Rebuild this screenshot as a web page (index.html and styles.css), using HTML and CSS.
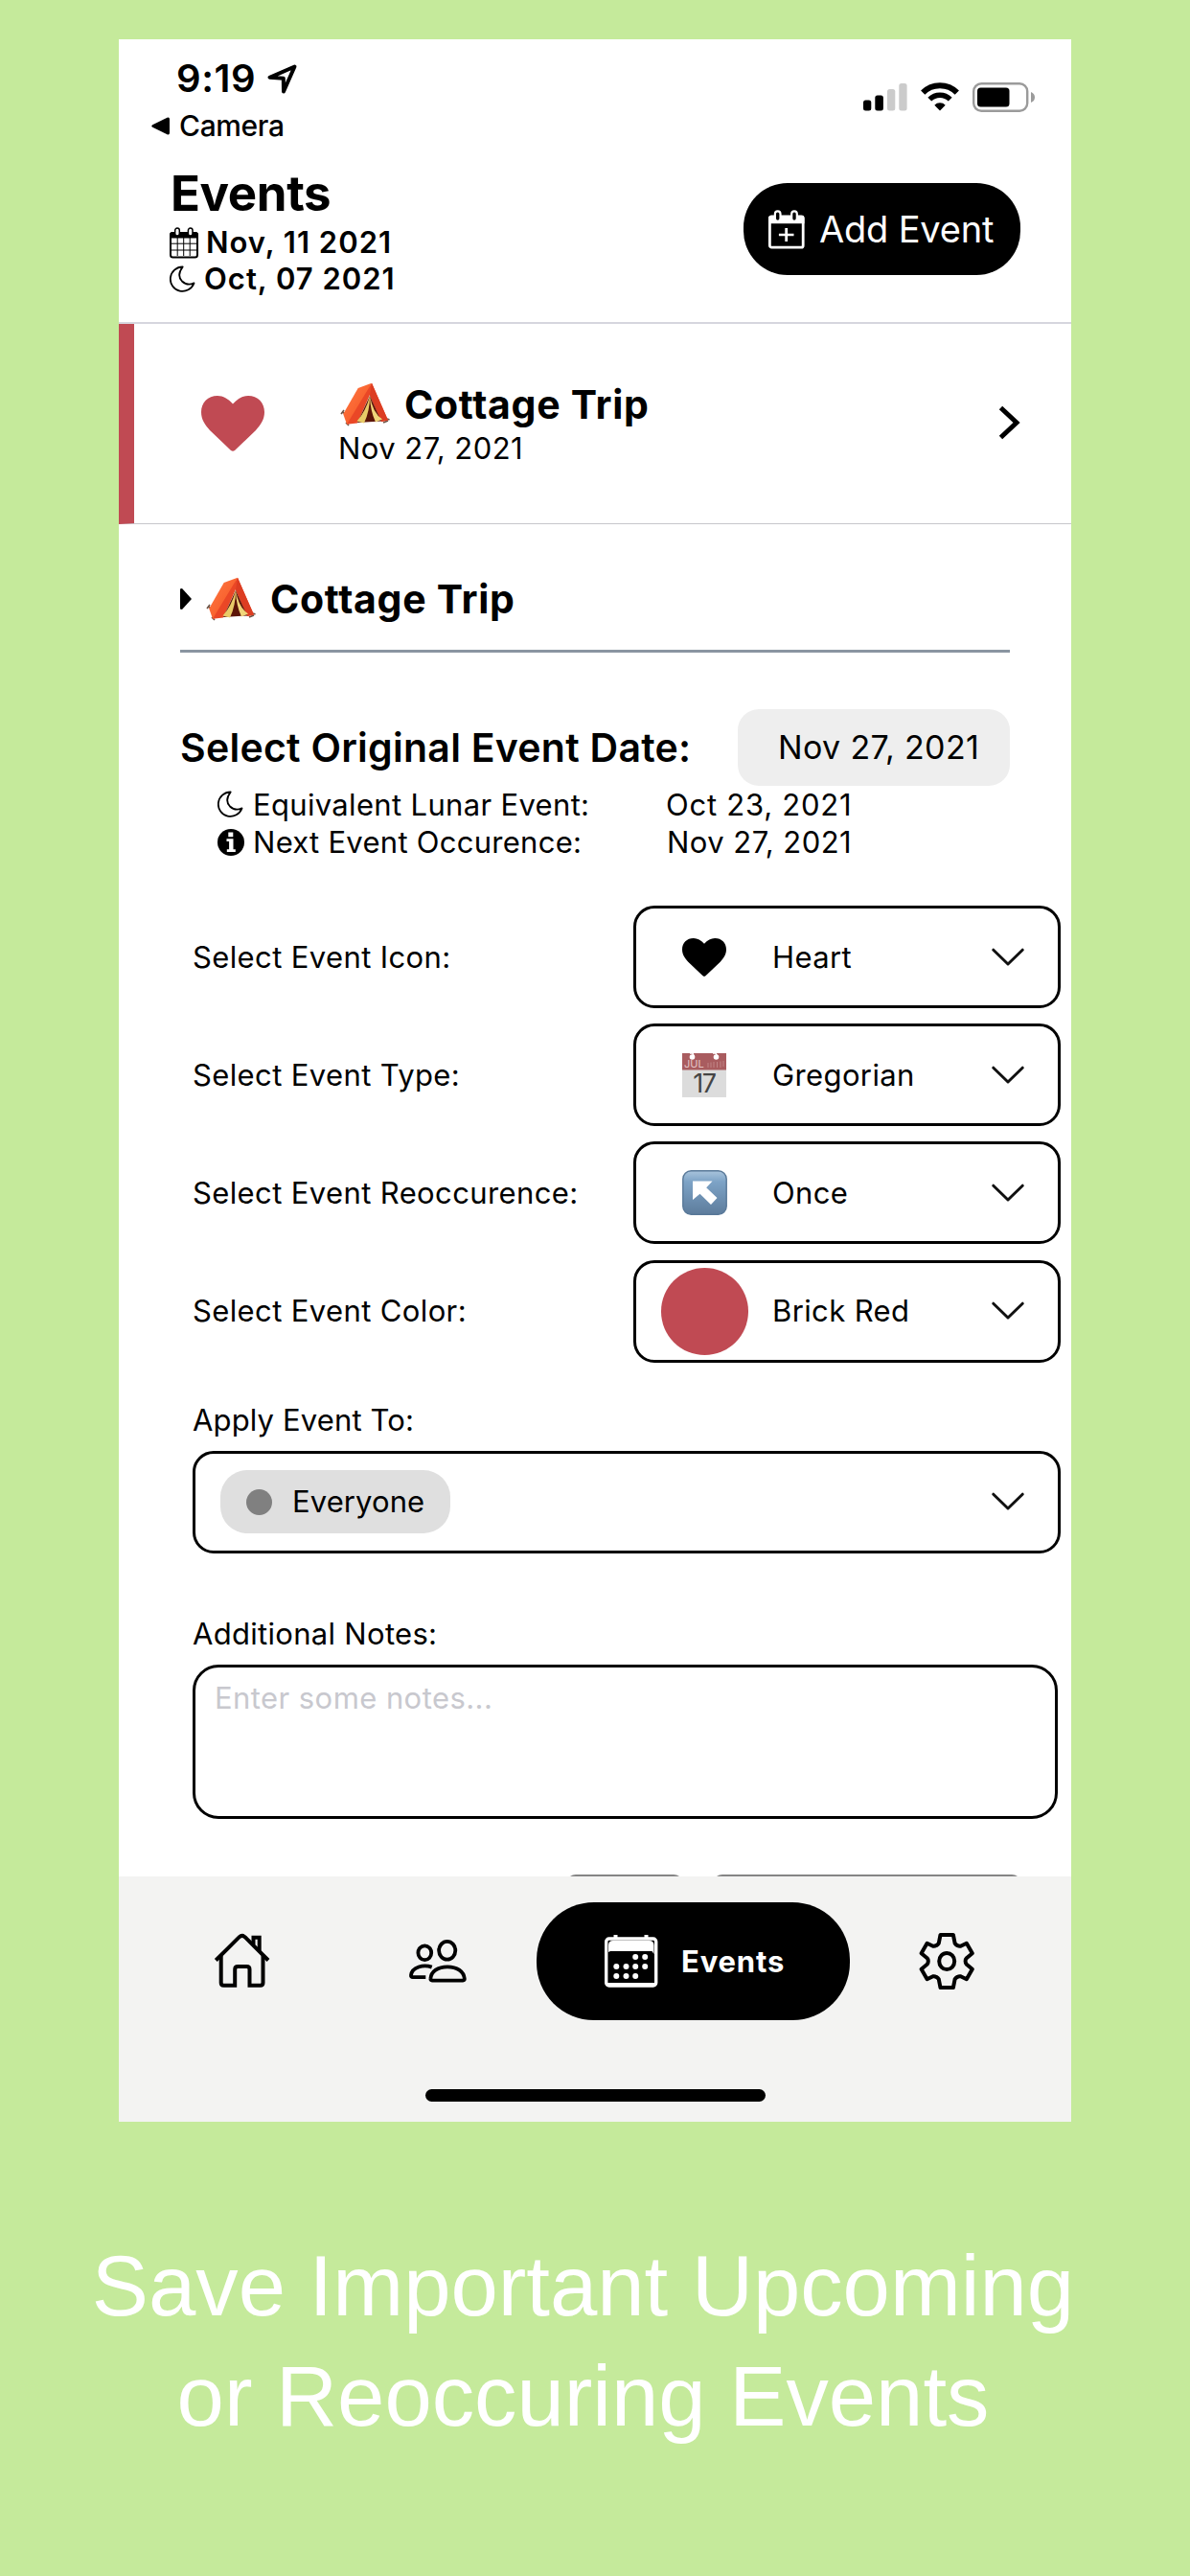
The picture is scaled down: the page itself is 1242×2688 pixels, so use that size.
FILE: index.html
```html
<!DOCTYPE html>
<html lang="en">
<head>
<meta charset="utf-8">
<title>Events</title>
<link rel="stylesheet" href="styles.css">
</head>
<body>
<svg class="defs" width="0" height="0" aria-hidden="true">
  <defs>
    <linearGradient id="canvas-left" x1="0" y1="0" x2="1" y2="1"><stop offset="0" stop-color="#ff7a45"/><stop offset="1" stop-color="#f4511e"/></linearGradient>
    <linearGradient id="key-blue" x1="0" y1="0" x2="0" y2="1"><stop offset="0" stop-color="#a9c4dc"/><stop offset=".25" stop-color="#7da3c6"/><stop offset="1" stop-color="#5d7c9c"/></linearGradient>
    <symbol id="tent" viewBox="0 0 52 46">
      <path d="M2 31l6 3M4 29l-3 4M6 42l3 3M49 38l2.5 1M45 42l5-2" stroke="#6b5245" stroke-width="1.6" fill="none"/>
      <path d="M33 .8L18.7 6 3.2 33 7 43.8 14 42z" fill="url(#canvas-left)"/>
      <path d="M33 .8L7 43.8 18 42.4 31 13 43 41 50 39.5z" fill="#ea4726"/>
      <path d="M33 .8L31 14 43 41 50 39.5z" fill="#dc3d22"/>
      <path d="M31 14L18 42 43 40.5z" fill="#5c1508"/>
      <path d="M31 14Q27 30 17.5 40.5L25 42.5Q31 30 31 14z" fill="#e9cb68"/>
      <path d="M31 14Q34 32 44 38.5L37 41.5Q31.500 30 31 14z" fill="#f0d57a"/>
    </symbol>
    <symbol id="moon" viewBox="0 0 27 29">
      <path d="M13.700 1.500C9.500 7 9.200 12.500 13 16.500c3.500 3.400 8 4 12.500 1.900A12.700 12.700 0 1 1 13.700 1.500z" fill="none" stroke="#000" stroke-width="1.800" stroke-linejoin="round"/>
    </symbol>
    <symbol id="heart" viewBox="0 0 66 58">
      <path d="M33 8.500C38 3 43 0 49 0c10 0 17 7 17 17 0 8-4 13-9 19L35 57q-2 1.500-4 0L9 36C4 30 0 25 0 17 0 7 7 0 17 0c6 0 11 3 16 8.500z"/>
    </symbol>
    <symbol id="chevron" viewBox="0 0 34 20">
      <path d="M1.800 2.200L17 17 32.200 2.200" fill="none" stroke="#111" stroke-width="3" stroke-linecap="round" stroke-linejoin="round"/>
    </symbol>
  </defs>
</svg>
<main class="phone">
  <div class="status">
    <div class="status-left">
      <div class="clock">9:19
        <svg width="31" height="31" viewBox="0 0 31 31"><path d="M28.500 2.500L2.500 13.800l14.300 1 .2 13.700z" fill="none" stroke="#000" stroke-width="4" stroke-linejoin="round"/></svg>
      </div>
      <div class="back"><svg width="19" height="19" viewBox="0 0 19 19"><path d="M1.200 8.200L16.500.8Q19 0 19 2.500v14q0 2.500-2.500 1.700L1.200 10.800q-1.900-1.300 0-2.600z"/></svg>Camera</div>
    </div>
    <div class="status-right">
      <svg width="46" height="30" viewBox="0 0 46 30"><rect y="18.500" width="8.300" height="11" rx="2.500"/><rect x="12.300" y="13.500" width="8.600" height="16" rx="2.500"/><rect x="25" y="7" width="8.300" height="22.500" rx="2.500" fill="#cbcbcb"/><rect x="37.300" y="1" width="8.300" height="28.500" rx="2.500" fill="#cbcbcb"/></svg>
      <svg width="40" height="30" viewBox="0 0 40 30"><g fill="none" stroke="#000"><path d="M2.200 10.700a25.200 25.200 0 0 1 35.600 0" stroke-width="6"/><path d="M9.300 17.600a15.200 15.200 0 0 1 21.400 0" stroke-width="5.500"/></g><path d="M14.300 23.700a8 8 0 0 1 11.400 0L20 29.500z"/></svg>
      <svg width="65" height="31" viewBox="0 0 65 31"><rect x="1.200" y="1.200" width="56" height="28.600" rx="8" fill="none" stroke="#9b9b9b" stroke-width="2.400"/><rect x="5" y="5.500" width="33.500" height="20" rx="3.500"/><path d="M61 10q4 1.500 4 5.500t-4 5.500z" fill="#9b9b9b"/></svg>
    </div>
  </div>

  <header class="header">
    <div>
      <h1>Events</h1>
      <div class="today"><svg width="30" height="33" viewBox="0 0 30 33"><rect x="1" y="6" width="28" height="25.500" rx="2.500" fill="#fff" stroke="#000" stroke-width="2"/><path d="M0 11.500V8q0-3 3-3h24q3 0 3 3v3.500z"/><path d="M8.200 11v19M14.700 11v19M21.200 11v19M2 17.200h26M2 24h26" stroke="#000" stroke-width="1"/><rect x="5.700" y="1" width="4.600" height="8" rx="2.300" fill="#fff" stroke="#000" stroke-width="1.500"/><rect x="19.400" y="1" width="4.600" height="8" rx="2.300" fill="#fff" stroke="#000" stroke-width="1.500"/></svg>Nov, 11 2021</div>
      <div class="today lunar"><svg width="27" height="29"><use href="#moon"/></svg>Oct, 07 2021</div>
    </div>
    <button class="add" type="button"><svg width="38" height="41" viewBox="0 0 38 41"><rect x="1.400" y="7" width="34.800" height="32.200" rx="2" fill="none" stroke="#fff" stroke-width="2.800"/><path d="M0 14.300V8.500q0-2.500 2.500-2.500H35q2.500 0 2.500 2.500v5.800zM17.300 19h2.800v5.700h6.400v2.600h-6.400V33h-2.800v-5.700h-6.400v-2.600h6.400z" fill="#fff"/><g fill="#000" stroke="#fff" stroke-width="2.200"><rect x="6.900" y="1.300" width="5.600" height="10.500" rx="2.800"/><rect x="24.200" y="1.300" width="5.600" height="10.500" rx="2.800"/></g></svg>Add Event</button>
  </header>

  <article class="event">
    <svg class="event-heart" width="66" height="58"><use href="#heart"/></svg>
    <div class="event-text">
      <div class="title"><svg width="52" height="46"><use href="#tent"/></svg>Cottage Trip</div>
      <div class="date">Nov 27, 2021</div>
    </div>
    <svg width="24" height="38" viewBox="0 0 24 38"><path d="M3.500 3.500L20 19 3.500 34.500" fill="none" stroke="#000" stroke-width="5"/></svg>
  </article>

  <section class="scroll">
    <div class="details">
      <h2 class="title section-title"><svg class="marker" width="12" height="22" viewBox="0 0 12 22"><path d="M0 .5L2 0 12 11 2 22 0 21.500z"/></svg><svg width="52" height="46"><use href="#tent"/></svg>Cottage Trip</h2>
      <div class="pick-date"><span>Select Original Event Date:</span><span class="date-pill">Nov 27, 2021</span></div>
      <dl class="facts">
        <dt><svg width="27" height="29"><use href="#moon"/></svg>Equivalent Lunar Event:</dt><dd>Oct 23, 2021</dd>
        <dt class="next"><svg width="28" height="28" viewBox="0 0 28 28"><circle cx="14" cy="14" r="14"/><path d="M11.300 3.500h5v4.800h-5zM9.500 10.200h7v11h2.300V24h-9v-2.800h2.300v-8.200H9.500z" fill="#fff"/></svg>Next Event Occurence:</dt><dd class="next">Nov 27, 2021</dd>
      </dl>
    </div>

    <form class="form">
      <div class="field"><label>Select Event Icon:</label>
        <div class="select"><span class="pic"><svg width="46" height="40" viewBox="0 0 66 58" preserveAspectRatio="none"><use href="#heart" width="66" height="58"/></svg></span><span class="value">Heart</span><svg width="34" height="20"><use href="#chevron"/></svg></div></div>
      <div class="field"><label>Select Event Type:</label>
        <div class="select"><span class="pic"><svg width="46" height="46" viewBox="0 0 46 46"><path fill="#dcdcdc" d="M0 0h46v46H0z"/><path fill="#a95c5f" d="M0 0h46v17.500H0z"/><circle cx="10.500" cy="4" r="2.800" fill="#fff"/><circle cx="35.500" cy="4" r="2.800" fill="#fff"/><path d="M8 0h3l1 3M32 0h3l1.500 3" stroke="#fff" stroke-width="1.500" fill="none"/><path d="M27 10v5M30 9.500V15M33 9v6M36.500 9v6M40 8.500V15M43 8v6" stroke="#c08486"/><text class="month" x="2" y="15.300">JUL</text><text class="day" x="23" y="41" text-anchor="middle">17</text></svg></span><span class="value">Gregorian</span><svg width="34" height="20"><use href="#chevron"/></svg></div></div>
      <div class="field"><label>Select Event Reoccurence:</label>
        <div class="select"><span class="pic"><svg width="47" height="47" viewBox="0 0 47 47"><rect x=".8" y=".8" width="45.400" height="45.400" rx="8.500" fill="url(#key-blue)" stroke="#587898" stroke-width="1.400"/><path d="M11 11.500h20.500l-6.300 6.800L36.500 29 30 36 18.500 24.800 11 31z" fill="#fff"/></svg></span><span class="value">Once</span><svg width="34" height="20"><use href="#chevron"/></svg></div></div>
      <div class="field"><label>Select Event Color:</label>
        <div class="select"><span class="pic"><span class="swatch"></span></span><span class="value">Brick Red</span><svg width="34" height="20"><use href="#chevron"/></svg></div></div>

      <label class="stacked apply">Apply Event To:</label>
      <div class="select wide"><span class="chip"><i></i>Everyone</span><svg width="34" height="20"><use href="#chevron"/></svg></div>

      <label class="stacked notes-label">Additional Notes:</label>
      <div class="notes">Enter some notes...</div>
      <div class="actions"><span class="ghost small"></span><span class="ghost"></span></div>
    </form>
  </section>

  <nav class="nav">
    <div class="tabs">
      <svg width="58" height="57" viewBox="0 0 58 57"><g fill="none" stroke="#000" stroke-width="4"><path d="M1.300 27.500L25.800 3.200q2.900-2.600 5.800 0L56 27.500"/><path d="M6.700 23v28q0 2.700 2.700 2.700h11.800V37q0-3 3-3h9.300q3 0 3 3v16.700h11.300q2.700 0 2.700-2.700V23M40.500 11V3.700h6.200v14"/></g></svg>
      <svg width="60" height="46" viewBox="0 0 60 46"><g fill="none" stroke="#000" stroke-width="3.800"><ellipse cx="39.700" cy="11.300" rx="8.600" ry="9.400"/><ellipse cx="16.300" cy="13.700" rx="6.900" ry="7.400"/><path d="M24 42.600q-1.800 0-1.600-1.900C23 33 30 28.300 40 28.300S57 33 57.800 40.700q.2 1.900-1.600 1.900z"/><path d="M23.700 28.600C15 25.500 3 28.500 2 37q-.3 2.200 1.800 2.200h13.500"/></g></svg>
      <div class="tab-active"><svg width="56" height="56" viewBox="0 0 56 56"><rect x="1.700" y="4" width="52" height="49" rx="3" fill="none" stroke="#fff" stroke-width="3.400"/><path d="M4 18V11q0-5 5-5h37.500q5 0 5 5v9l-2-3H6zM3 50h49v4H3zM9.500 0h4v4h-4zM41.500 0h4v4h-4z" fill="#fff"/><g fill="#fff"><circle cx="32.200" cy="23" r="3"/><circle cx="42.200" cy="23" r="3"/><circle cx="12.300" cy="33" r="3"/><circle cx="22.500" cy="33" r="3"/><circle cx="32.200" cy="33" r="3"/><circle cx="42.200" cy="33" r="3"/><circle cx="12.300" cy="43" r="3"/><circle cx="22.500" cy="43" r="3"/><circle cx="32.200" cy="43" r="3"/></g></svg>Events</div>
      <svg width="57" height="59" viewBox="0 0 57 59"><g fill="none" stroke="#000" stroke-width="4" stroke-linejoin="round"><path d="M21.500 2h13.400l1.700 8.700q.8 1.500 2.600 2.400 1.800 1 3.400.6l6.200-3 6 10.500-6 5q-1.200 1.300-1.200 3.300t1.200 3.300l6 5-6 10.500-6.200-3q-1.600-.4-3.400.6-1.800.9-2.600 2.400L34.900 57H21.500l-1.700-8.700q-.8-1.500-2.600-2.400-1.800-1-3.400-.6l-6.200 3-6-10.500 6-5q1.200-1.300 1.200-3.300t-1.200-3.300l-6-5 6-10.500 6.200 3q1.600.4 3.400-.6 1.800-.9 2.600-2.400z"/><ellipse cx="28.200" cy="29.500" rx="8" ry="8.500"/></g></svg>
    </div>
    <div class="home-bar"></div>
  </nav>
</main>
<p class="caption">Save Important Upcoming<br>or Reoccuring Events</p>
</body>
</html>
```
FILE: styles.css
```css
* { box-sizing: border-box; }
body { margin: 0; height: 2688px; padding-top: 41px; overflow: hidden; background: #c5ea9b; color: #000; font: 400 31px/38px Inter, sans-serif; letter-spacing: .38px; white-space: nowrap; }
h1, h2, p, dl, dd { margin: 0; }
svg { display: block; flex: none; overflow: visible; }
.defs { position: absolute; }

.phone { display: flex; flex-direction: column; width: 994px; height: 2173px; margin-left: 124px; background: #fff; overflow: hidden; }

.status { display: flex; justify-content: space-between; height: 110px; padding: 16px 38px 0 34px; }
.clock { display: flex; align-items: center; gap: 12px; padding-left: 26px; font-size: 40px; font-weight: 600; line-height: 50px; letter-spacing: .6px; }
.back { display: flex; align-items: center; gap: 10px; margin-top: 4px; font-size: 30px; font-weight: 500; line-height: 40px; letter-spacing: -.36px; }
.status-right { display: flex; gap: 14px; margin-top: 29px; }

.header { display: flex; justify-content: space-between; height: 187px; padding: 21px 53px 0; border-bottom: 2px solid #d6d6de; }
h1 { padding-left: 1px; font-size: 51px; font-weight: 700; line-height: 60px; letter-spacing: -.4px; }
.today { display: flex; align-items: center; gap: 8px; height: 38px; margin-top: 2px; font-weight: 600; letter-spacing: 1px; }
.lunar { gap: 9px; margin-top: 0; }
.add { display: flex; align-items: center; gap: 15px; width: 289px; height: 96px; margin-top: 19px; padding: 0 0 0 26px; border: 0; border-radius: 46px; background: #000; color: #fff; font: 400 38px/50px Inter, sans-serif; letter-spacing: -.19px; }

.event { display: flex; align-items: flex-start; height: 209px; padding: 59px 53px 0 70px; border-left: 16px solid #c04a53; border-bottom: 1px solid #c6c6cb; }
.event-heart { margin-top: 16px; fill: #c04a53; }
.event-text { flex: 1; margin-left: 79px; }
.event > svg:last-child { margin-top: 25px; }
.title { display: flex; align-items: center; gap: 15px; font-size: 41px; font-weight: 700; line-height: 50px; letter-spacing: .7px; }
.date { margin: 2px 0 0 -2px; letter-spacing: .45px; }

.scroll { flex: 1; min-height: 0; overflow: hidden; }
.details { padding: 53px 64px 0; }
.section-title { padding-bottom: 28px; border-bottom: 3px solid #8a95a1; }
.marker { margin-right: 0; }
.pick-date { display: flex; align-items: center; justify-content: space-between; margin-top: 59px; font-size: 41px; font-weight: 600; letter-spacing: .26px; }
.date-pill { width: 284px; height: 80px; padding-left: 42px; border-radius: 22px; background: #eee; font-size: 34px; font-weight: 400; line-height: 80px; letter-spacing: .36px; }
.facts { display: grid; grid-template-columns: 468px 1fr; grid-auto-rows: 39px; padding-left: 39px; line-height: 39px; letter-spacing: .33px; }
.facts dt { display: flex; align-items: center; gap: 10px; }
.facts dd { letter-spacing: .75px; }
.facts dt.next { gap: 9px; letter-spacing: .27px; }
.facts dd.next { padding-left: 1px; letter-spacing: .45px; }

.form { display: flex; flex-direction: column; padding: 47px 11px 0 77px; }
.field { display: flex; align-items: center; justify-content: space-between; margin-bottom: 16.2px; }
.select { display: flex; align-items: center; width: 446px; height: 107px; padding-right: 35px; border: 3px solid #000; border-radius: 22px; }
.pic { display: flex; justify-content: center; width: 142px; }
.value { flex: 1; }
.month { fill: #e3c3c4; font-size: 11px; letter-spacing: 0; }
.day { fill: #444; font-size: 27px; letter-spacing: -1.5px; }
.swatch { width: 91px; height: 91px; border-radius: 50%; background: #c04a53; }
.stacked { display: block; margin-bottom: 13px; }
.apply { margin-top: 25px; letter-spacing: .14px; }
.wide { justify-content: space-between; width: 906px; padding-left: 26px; }
.chip { display: flex; align-items: center; gap: 21px; width: 240px; height: 66px; padding-left: 27px; border-radius: 28px; background: #dfdfdf; letter-spacing: .1px; }
.chip i { width: 27px; height: 27px; border-radius: 50%; background: #808080; }
.notes-label { margin-top: 65px; letter-spacing: .3px; }
.notes { width: 903px; height: 161px; padding: 13px 20px; border: 3px solid #000; border-radius: 27px; color: #c8c8ce; letter-spacing: .43px; line-height: 38px; }
.actions { display: flex; justify-content: flex-end; gap: 31px; margin-top: 58px; padding-right: 41px; }
.ghost { width: 322px; height: 70px; border: 2px solid #858585; border-radius: 10px; }
.small { width: 122px; }

.nav { height: 256px; padding-top: 27px; background: #f3f3f2; }
.tabs { display: flex; align-items: center; padding-left: 100px; }
.tabs > svg:nth-child(2) { margin: 0 73px 0 145px; }
.tabs > svg:last-child { margin-left: 73px; }
.tab-active { display: flex; align-items: center; gap: 24px; width: 327px; height: 123px; padding-left: 71px; border-radius: 60px; background: #000; color: #fff; font-weight: 700; letter-spacing: .85px; }
.home-bar { width: 355px; height: 13px; margin: 72px 0 0 320px; border-radius: 7px; background: #000; }

.caption { margin-top: 114px; padding-right: 25px; color: #fff; font: 88.7px/115px "Liberation Sans", Arial, sans-serif; letter-spacing: 0; text-align: center; }
```
